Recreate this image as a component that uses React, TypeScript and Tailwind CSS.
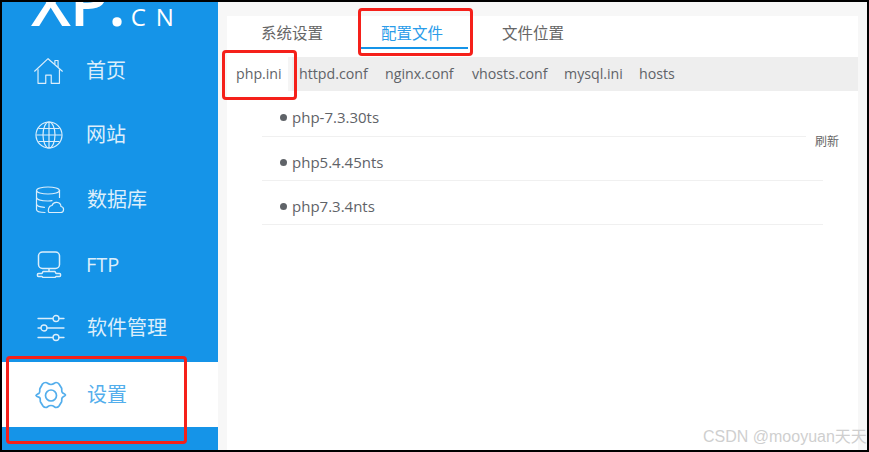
const font = { fontFamily: '"Open Sans", "Noto Sans CJK SC", sans-serif' };

const HomeIcon = () => (
  <svg width="31" height="28" viewBox="0 0 34 30" fill="none" stroke="currentColor" strokeWidth="1.3" strokeLinejoin="round">
    <path d="M1.5 15.5 16.5 1.5 32.5 15.5" />
    <path d="M24 7.5V3.5h3.5v7" />
    <path d="M5.5 13v15.5h8.5v-9h6v9h9V13" />
  </svg>
);

const GlobeIcon = () => (
  <svg width="28" height="28" viewBox="0 0 28 28" fill="none" stroke="currentColor" strokeWidth="1.2">
    <circle cx="14" cy="14" r="13" />
    <ellipse cx="14" cy="14" rx="6" ry="13" />
    <path d="M14 1v26M1.5 14h25M3.5 7.5h21M3.5 20.5h21" />
  </svg>
);

const DatabaseIcon = () => (
  <svg width="30" height="28" viewBox="0 0 30 28" fill="none" stroke="currentColor" strokeWidth="1.2" strokeLinecap="round">
    <ellipse cx="13" cy="4.5" rx="11.5" ry="3.5" />
    <path d="M1.5 4.5v19c0 1.8 4 3 8.5 3" />
    <path d="M24.5 4.5v7" />
    <path d="M1.5 11.5c0 2 5 3.5 11.5 3.5 2 0 3-.1 4-.4" />
    <path d="M1.5 18c0 1.8 3.5 3 8 3.3" />
    <path d="M14 26.5h11.5c4 0 4-5.5.5-6-.5-5-7.5-5.5-9-1-3.5 0-4.5 5.5-3 7z" />
  </svg>
);

const FtpIcon = () => (
  <svg width="26" height="27" viewBox="0 0 26 27" fill="none" stroke="currentColor" strokeWidth="1.5" strokeLinejoin="round">
    <rect x="2.5" y="1" width="21" height="16.5" rx="4" />
    <path d="M13 17.5v3" />
    <path d="M7 20.5h12l1 2h3.5c1.5 0 1.5 3 0 3H20l-1 1H7l-1-1H2.5c-1.5 0-1.5-3 0-3H6z" />
  </svg>
);

const SlidersIcon = () => (
  <svg width="28" height="28" viewBox="0 0 28 28" fill="none" stroke="currentColor" strokeWidth="1.3" strokeLinecap="round">
    <path d="M1 4.5h15M22 4.5h5" />
    <circle cx="19" cy="4.5" r="3" />
    <path d="M1 14h3M10 14h17" />
    <circle cx="7" cy="14" r="3" />
    <path d="M1 23.5h15M22 23.5h5" />
    <circle cx="19" cy="23.5" r="3" />
  </svg>
);

const GearIcon = () => (
  <svg width="32" height="28" viewBox="0 0 32 28" fill="none" stroke="currentColor" strokeWidth="1.7" strokeLinejoin="round">
    <path d="M11 1.5c1.5 0 2 2 5 2s3.5-2 5-2c1.2 0 2.3.5 3 1.5l2.5 4c.8 1.5-.5 2.5.8 4.5.7 1 2.7 1.2 3.2 2.5-.5 1.3-2.5 1.5-3.2 2.5-1.3 2-0 3-.8 4.5l-2.5 4c-.7 1-1.8 1.5-3 1.5-1.5 0-2-2-5-2s-3.5 2-5 2c-1.2 0-2.3-.5-3-1.5l-2.5-4c-.8-1.5.5-2.5-.8-4.5C3.5 16 1.5 15.8 1 14.5c.5-1.3 2.5-1.5 3.2-2.5 1.3-2 0-3 .8-4.5L7.5 3c.7-1 2.3-1.5 3.5-1.5z" />
    <circle cx="16" cy="14.5" r="5.5" />
  </svg>
);

const navItems = [
  { label: "首页", icon: <HomeIcon />, rowClass: "h-[64px]", iconClass: "pl-[31px] w-[84px]" },
  { label: "网站", icon: <GlobeIcon />, rowClass: "h-[64px]", iconClass: "pl-[33px] w-[84px]" },
  { label: "数据库", icon: <DatabaseIcon />, rowClass: "h-[65px]", iconClass: "pl-[33px] w-[85px]" },
  { label: "FTP", icon: <FtpIcon />, rowClass: "h-[65px]", iconClass: "pl-[34px] w-[84px]" },
  { label: "软件管理", icon: <SlidersIcon />, rowClass: "h-[62px]", iconClass: "pl-[35px] w-[85px]" },
];

const confTabs = ["httpd.conf", "nginx.conf", "vhosts.conf", "mysql.ini", "hosts"];
const versions = ["php-7.3.30ts", "php5.4.45nts", "php7.3.4nts"];

const App = () => {
  return (
    <div className="relative w-[869px] h-[452px] overflow-hidden bg-black pt-[2px] pl-[2px] pr-[2px] pb-[2px]" style={font}>
      <div className="flex h-full bg-[#f7f7f7]">
        {/* sidebar */}
        <div className="w-[216px] shrink-0 bg-[#1594e8] text-[#dceefb]">
          <div className="h-[37px] overflow-hidden">
            <div className="flex items-start pl-[29px] text-white">
              <span className="text-[64px] leading-[0px] font-semibold tracking-[-1px]">XP.</span>
              <span className="text-[24px] leading-[29px] ml-[6px] tracking-[10px] whitespace-nowrap">CN</span>
            </div>
          </div>
          {navItems.map((item) => (
            <div key={item.label} className={`flex items-center ${item.rowClass}`}>
              <div className={`shrink-0 ${item.iconClass}`}>{item.icon}</div>
              <span className="text-[20px]">{item.label}</span>
            </div>
          ))}
          <div className="mt-[3px] h-[65px] flex items-center bg-white text-[#53aeec]">
            <div className="shrink-0 pl-[33px] w-[85px]"><GearIcon /></div>
            <span className="text-[20px]">设置</span>
          </div>
        </div>

        {/* content */}
        <div className="flex-1 pl-[9px] pt-[14px] pr-[9px]">
          <div className="h-full bg-white text-[#666]">
            <div className="flex h-[41px] items-start text-[15.5px] leading-[34px]">
              <div className="ml-[34px] w-[62px]">系统设置</div>
              <div className="ml-[38px] w-[107px] h-[33px] border-b-2 border-[#1594e8] pl-[20px] text-[#2b9ce9]">配置文件</div>
              <div className="ml-[34px]">文件位置</div>
            </div>
            <div className="flex h-[34px] items-center bg-[#eeeeee] text-[14.2px] text-[#5f6368]">
              <div className="flex h-full items-center w-[65px] pl-[9px] bg-white border-r-4 border-[#f5f5f5]">php.ini</div>
              <div className="ml-[7px] w-[69px]">{confTabs[0]}</div>
              <div className="ml-[17px] w-[70px]">{confTabs[1]}</div>
              <div className="ml-[17px] w-[75px]">{confTabs[2]}</div>
              <div className="ml-[17px] w-[58px]">{confTabs[3]}</div>
              <div className="ml-[17px]">{confTabs[4]}</div>
            </div>
            <div className="relative pl-[35px] w-[596px] text-[15px] text-[#5f6368]">
              {versions.map((v, i) => (
                <div
                  key={v}
                  className={`flex items-center h-[44px] pt-[8px] pl-[18px] border-b border-[#f0f0f0] ${i === 0 ? "mr-[17px] h-[46px]" : ""} ${i === 1 ? "h-[43px]" : ""}`}
                >
                  <span className="w-[7px] h-[7px] rounded-full bg-[#5f6368] mr-[5px]" />
                  {v}
                </div>
              ))}
              <div className="absolute left-[588px] top-[43px] whitespace-nowrap text-[12px] leading-[16px] text-[#666]">刷新</div>
            </div>
          </div>
        </div>
      </div>

      {/* annotation boxes drawn over the screenshot */}
      <div className="absolute left-[6px] top-[356px] w-[181px] h-[88px] border-[3px] border-[#f5201a] rounded-[4px]" />
      <div className="absolute left-[358px] top-[8px] w-[115px] h-[48px] border-[3px] border-[#f5201a] rounded-[4px]" />
      <div className="absolute left-[222px] top-[50px] w-[75px] h-[50px] border-[3px] border-[#f5201a] rounded-[4px]" />

      <div className="absolute left-[703px] top-[428px] text-[16px] leading-[18px] text-[#cfcfcf]" style={{ fontFamily: '"Liberation Sans", "Noto Sans CJK SC", sans-serif' }}>
        CSDN @mooyuan天天
      </div>
    </div>
  );
};

export default App;
